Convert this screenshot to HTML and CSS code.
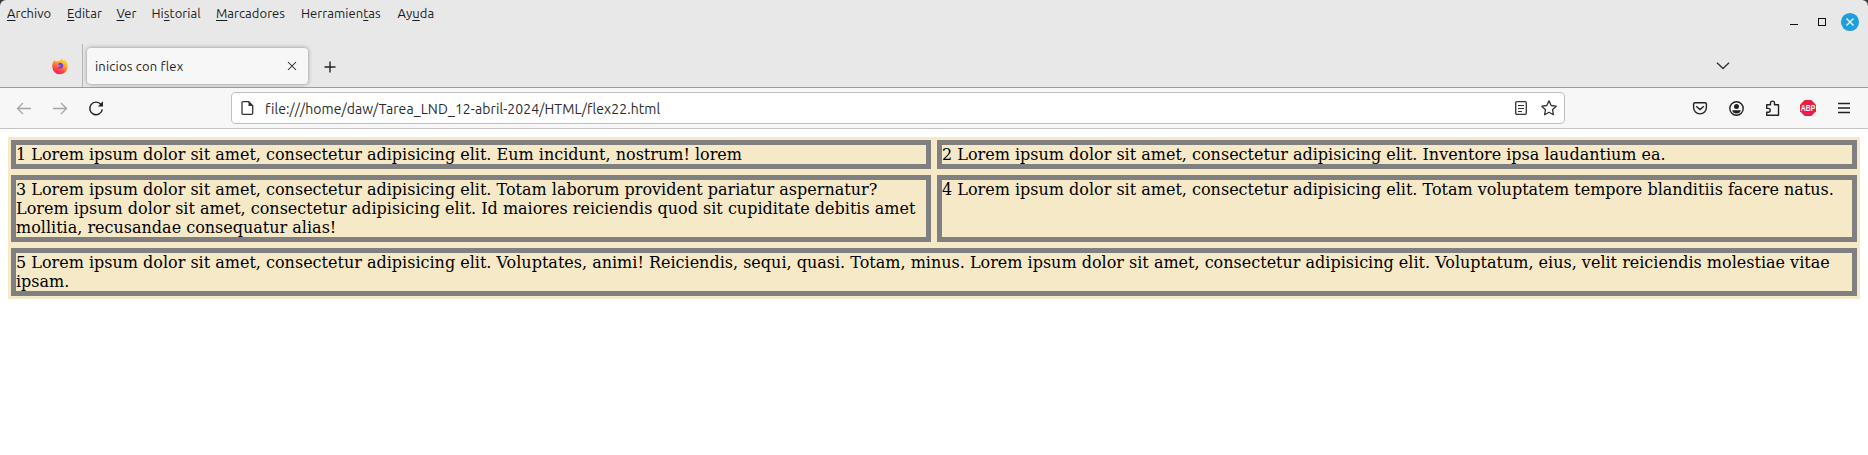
FILE: index.html
```html
<!DOCTYPE html>
<html lang="es">
<head>
<meta charset="utf-8">
<title>inicios con flex</title>
<link rel="stylesheet" href="styles.css">
</head>
<body>
<div class="window">
  <header class="chrome">
    <div class="titlebar">
      <nav class="menu">
        <span><u>A</u>rchivo</span><span><u>E</u>ditar</span><span><u>V</u>er</span><span>Hi<u>s</u>torial</span><span><u>M</u>arcadores</span><span>Herramien<u>t</u>as</span><span>Ay<u>u</u>da</span>
      </nav>
      <svg class="controls" width="84" height="24" viewBox="1784 10 84 24">
        <path d="M1790 24.5h8" stroke="#111"/>
        <rect x="1818.5" y="18.5" width="7" height="7" fill="none" stroke="#111"/>
        <circle cx="1850" cy="22" r="9.1" fill="#1f9ede"/>
        <path d="M1846.5 18.5l7 7m0-7l-7 7" stroke="#fff" stroke-width="1.3"/>
      </svg>
    </div>
    <div class="tabs">
      <div class="pinned">
        <svg width="18" height="18" viewBox="0 0 18 18">
          <defs><linearGradient id="fire" x1=".8" y1="0" x2=".3" y2="1"><stop offset="0" stop-color="#fff044"/><stop offset=".4" stop-color="#ffa52a"/><stop offset=".7" stop-color="#ff4f3f"/><stop offset="1" stop-color="#f5156c"/></linearGradient></defs>
          <path d="M3.300 3.200C3.800 4 4.200 4.400 5 4.500c1-.5 2-.7 3-.5L9.600 3 11 .8c.4 1.800 1.200 2.300 2 3.200l.5-1.200c2.200 1.700 3.300 3.800 3.200 6.800A7.700 7.700 0 0 1 1.300 9.700c-.2-2.300.4-4.500 2-6.500z" fill="url(#fire)"/>
          <path d="M7 7c.6-1 1.600-1.400 2.700-1.200 1.900.3 2.700 1.700 2.600 3.100a3.300 3.300 0 0 1-6.300.9c1 .6 2.200.3 3-.3.9-.6.500-1-.5-1-.7 0-1-.9-1.500-1.500z" fill="#7542e5"/>
        </svg>
      </div>
      <div class="tab"><span>inicios con flex</span>
        <svg width="10" height="10" viewBox="0 0 10 10"><path d="M1 1l8 8m0-8L1 9" stroke="#222" stroke-width="1.050"/></svg>
      </div>
      <svg class="plus" width="12" height="12" viewBox="0 0 12 12"><path d="M6 .5v11M.5 6h11" stroke="#222" stroke-width="1.400"/></svg>
      <svg class="chevron" width="14" height="8" viewBox="0 0 14 8"><path d="M1 .8l6 5.700 6-5.700" fill="none" stroke="#333" stroke-width="1.400"/></svg>
    </div>
  </header>
  <div class="toolbar">
    <svg class="nav" width="110" height="20" viewBox="0 0 110 20" fill="none">
      <path d="M17.500 10.500h13.500M23 5l-5.500 5.500L23 16M53 10.500h13.500M61 5l5.500 5.500L61 16" stroke="#a5a5a5" stroke-width="1.300"/>
      <path d="M101 6.500a6.300 6.300 0 1 0 1.300 4.800" stroke="#222" stroke-width="1.400"/><path d="M103 3.300v5.200h-5.200z" fill="#222"/>
    </svg>
    <div class="url">
      <svg width="14" height="16" viewBox="0 0 14 16"><path d="M2 1.700h5.700l4 4v7.600q0 1-1 1H2q-1 0-1-1V2.700q0-1 1-1z" fill="none" stroke="#333" stroke-width="1.300"/><path d="M7.500 1l5 5h-5z" fill="#333"/></svg>
      <span class="address">file:///home/daw/Tarea_LND_12-abril-2024/HTML/flex22.html</span>
      <svg class="page-actions" width="44" height="18" viewBox="0 0 44 18" fill="none" stroke="#333">
        <rect x="1.700" y="2.700" width="10.600" height="12.600" rx="1.300" stroke-width="1.300"/><path d="M4 6.500h6M4 9.500h6M4 12.500h4"/>
        <path d="M35 1.900l2.200 4.600 5 .7-3.700 3.500.9 5-4.400-2.400-4.400 2.400.9-5-3.700-3.500 5-.7z" stroke-width="1.300" stroke-linejoin="round"/>
      </svg>
    </div>
    <svg class="actions" width="168" height="20" viewBox="1690 98 168 20" fill="none" stroke="#222" stroke-width="1.400">
      <path d="M1695 102.700h10q1.400 0 1.400 1.400v3.400a6.400 6.400 0 0 1-12.800 0v-3.400q0-1.400 1.400-1.400zM1696.200 106.200l3.800 3.400 3.800-3.400"/>
      <circle cx="1736.500" cy="108.500" r="6.700"/><circle cx="1736.500" cy="106.500" r="2.500" fill="#222" stroke="none"/><path d="M1732.300 110.200h8.400q-.5 3.300-4.200 3.300t-4.200-3.300z" fill="#222" stroke="none"/>
      <path d="M1766.700 105v-.3h3.800v-1.800q0-1.800 2-1.800t2 1.800v1.800h4v10.600h-11.800v-3.100h1.600q1.900 0 1.900-1.900t-1.900-1.900h-1.600z" stroke-linejoin="round"/>
      <path d="M1804.700 100h6.600l4.700 4.700v6.600l-4.700 4.700h-6.600l-4.700-4.700v-6.600z" fill="#ed1e45" stroke="none"/>
      <text x="1800.800" y="111.300" textLength="14.400" lengthAdjust="spacingAndGlyphs" class="abp">ABP</text>
      <path d="M1838 103.500h12M1838 108h12M1838 112.500h12"/>
    </svg>
  </div>
</div>
<main class="container">
  <div class="item">1 Lorem ipsum dolor sit amet, consectetur adipisicing elit. Eum incidunt, nostrum! lorem</div>
  <div class="item">2 Lorem ipsum dolor sit amet, consectetur adipisicing elit. Inventore ipsa laudantium ea.</div>
  <div class="item">3 Lorem ipsum dolor sit amet, consectetur adipisicing elit. Totam laborum provident pariatur aspernatur? Lorem ipsum dolor sit amet, consectetur adipisicing elit. Id maiores reiciendis quod sit cupiditate debitis amet mollitia, recusandae consequatur alias!</div>
  <div class="item">4 Lorem ipsum dolor sit amet, consectetur adipisicing elit. Totam voluptatem tempore blanditiis facere natus.</div>
  <div class="item">5 Lorem ipsum dolor sit amet, consectetur adipisicing elit. Voluptates, animi! Reiciendis, sequi, quasi. Totam, minus. Lorem ipsum dolor sit amet, consectetur adipisicing elit. Voluptatum, eius, velit reiciendis molestiae vitae ipsam.</div>
</main>
</body>
</html>
```
FILE: styles.css
```css
* { box-sizing: border-box; }
body { margin: 0; background: #fff; overflow: hidden; }
svg { display: block; flex: none; }
.window { background: #3a3a3a; font-family: Ubuntu, "Noto Sans", sans-serif; color: #1c1c1c; }
.chrome { height: 88px; background: #e8e8e8; border-bottom: 1px solid #9c9c9c; border-radius: 6px 6px 0 0; }
.titlebar { display: flex; justify-content: space-between; height: 44px; padding-left: 7px; }
.menu { display: grid; grid-template-columns: 60px 49.5px 35px 64.5px 85px 96.5px 50px; height: 27px; font-size: 13px; line-height: 27px; letter-spacing: .05px; white-space: nowrap; }
.menu u { text-underline-offset: 2px; text-decoration-thickness: 1px; }
.controls { margin-top: 10px; }
.tabs { display: flex; height: 43px; align-items: flex-start; }
.pinned { width: 83px; height: 43px; padding: 13px 0 0 51px; border-right: 1px solid #b5b5b5; }
.tab { display: flex; align-items: center; justify-content: space-between; width: 221px; height: 36px; margin: 4px 0 0 4px; padding: 0 11px 0 8px; border-radius: 4px; background: #f7f7f7; box-shadow: 0 0 4px rgba(0, 0, 0, .4); font-size: 13px; letter-spacing: .2px; }
.plus { margin: 17px 0 0 15.5px; }
.chevron { margin: 18px 138px 0 auto; }
.toolbar { display: flex; align-items: center; height: 41px; background: #f7f7f7; border-bottom: 1px solid #c4c4c4; }
.url { display: flex; align-items: center; width: 1334px; height: 32px; margin-left: 121px; padding: 0 6px 0 9px; border: 1px solid #c0c0c0; border-radius: 4px; background: #fff; font-size: 14px; }
.address { margin-left: 10px; padding-top: 1px; color: #2b2b2b; letter-spacing: .085px; white-space: nowrap; }
.page-actions { margin-left: auto; }
.actions { margin-left: 125px; }
.abp { font: bold 8.5px "Liberation Sans", sans-serif; fill: #fff; stroke: none; }
.container { display: flex; flex-wrap: wrap; margin: 8px; background: #f5e9c8; font: 16px/19px "DejaVu Serif", serif; color: #000; }
.item { flex: 1 1 45%; margin: 3px; border: 5px solid #808080; }
```
